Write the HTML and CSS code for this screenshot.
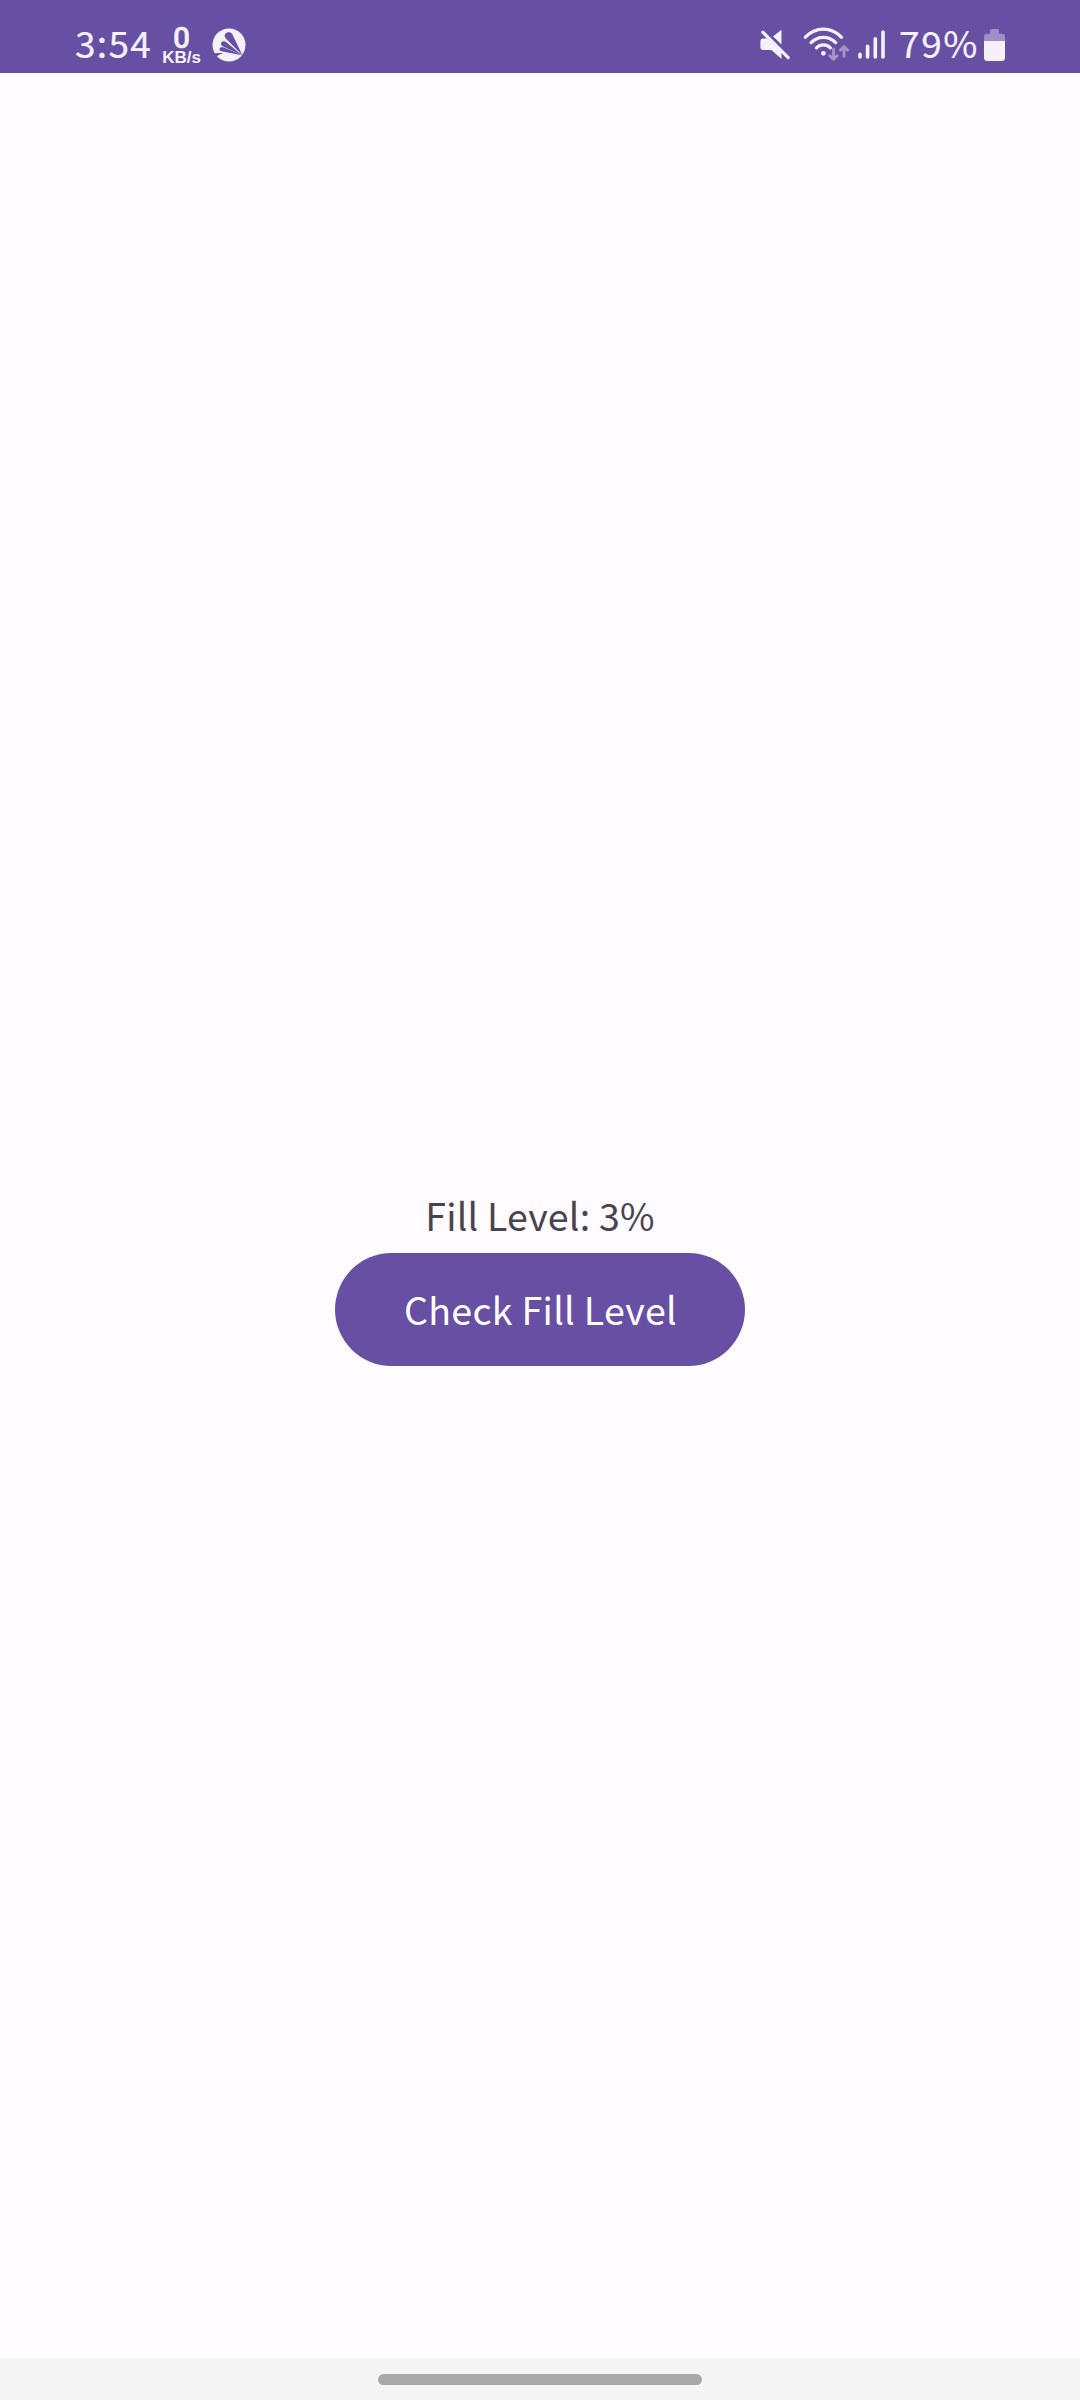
FILE: index.html
```html
<!DOCTYPE html>
<html lang="en">
<head>
<meta charset="utf-8">
<title>Fill Level</title>
<link rel="stylesheet" href="styles.css">
</head>
<body>
<div class="screen">
  <header class="status-bar">
    <div class="status-group">
      <span class="clock">3:54</span>
      <span class="net-speed"><span class="net-value">0</span><span class="net-unit">KB/s</span></span>
      <svg class="app-icon" width="34" height="34" viewBox="0 0 34 34">
        <circle class="solid" cx="17" cy="17" r="16.5"/>
        <path class="cutout" d="M12.7 8.2C12.2 4.5 18 2.6 20.4 6.3L30.4 27.2 15 11.8C13.6 10.4 12.9 9.4 12.7 8.2Z"/>
        <path class="cutout" d="M9 15.4C9.2 12.9 12.4 12.5 14.4 14.2L30 27.2 11.6 18.8C9.8 18 8.8 17 9 15.4Z"/>
        <path class="cutout" d="M7.5 20.7C8 18.9 10.2 18.9 12 19.6L30 27.2 10.6 23.6C8.6 23.2 7 22.4 7.5 20.7Z"/>
        <path class="cutout" d="M0 26.3C4 25.2 7 24.8 11 25.4C8 25.9 6 27 4.4 28.8L0 30Z"/>
      </svg>
    </div>
    <div class="status-group">
      <svg class="mute" width="32" height="32" viewBox="0 0 32 32">
        <path class="solid" d="M13 7.6L21.5 .8V15.6Z"/>
        <path class="solid" d="M2.7 9.6H8.6L21.5 23V30L11.4 21H2.7Q.4 21 .4 18.6V12Q.4 9.6 2.7 9.6Z"/>
        <path class="stroke slash-gap" d="M4.6 1.4L30.4 27.5"/>
        <path class="stroke slash" d="M2.8 3.2L28.2 28.6"/>
      </svg>
      <svg class="wifi" width="46" height="36" viewBox="0 0 46 36">
        <path class="stroke wave" d="M2.4 10.2C12.4 -.5 28.4 -.5 38.4 10.2M8.1 15.6C15 8.5 25.8 8.5 32.7 15.6M13.5 20.8C17.3 16.9 23.5 16.9 27.3 20.8"/>
        <circle class="solid" cx="20.4" cy="26.3" r="2.4"/>
        <path class="stroke arrows" d="M30.5 22.2V32M26.8 28.7L30.5 32.3 34.2 28.7M41 29.3V19.7M37.3 23.2L41 19.5 44.7 23.2"/>
      </svg>
      <svg class="signal" width="28" height="32" viewBox="0 0 28 32">
        <path class="stroke bars" d="M2 25.2V28M9.6 17.2V28M17.3 9.8V28M25 3V28"/>
      </svg>
      <span class="battery-text">79%</span>
      <svg class="battery" width="21" height="32" viewBox="0 0 21 32">
        <path class="faded" d="M0 12V8Q0 4.7 3.3 4.7H6V2Q6 0 8 0H13Q15 0 15 2V4.7H17.7Q21 4.7 21 8V12Z"/>
        <path class="solid" d="M0 12H21V28.5Q21 32 17.5 32H3.5Q0 32 0 28.5Z"/>
      </svg>
    </div>
  </header>
  <main class="content">
    <p class="level">Fill Level: 3%</p>
    <button class="check" type="button">Check Fill Level</button>
  </main>
  <footer class="nav-bar"><div class="handle"></div></footer>
</div>
</body>
</html>
```
FILE: styles.css
```css
* { box-sizing: border-box; }
body { margin: 0; }
.screen {
  width: 1080px;
  height: 2400px;
  display: flex;
  flex-direction: column;
  background: #fffbfe;
  font-family: "Noto Sans CJK SC", "Noto Sans", sans-serif;
}
.status-bar {
  height: 73px;
  padding: 17px 75px 0 75px;
  display: flex;
  justify-content: space-between;
  background: #6750a3;
  color: #f5f1fb;
}
.status-group { display: flex; align-items: flex-start; }
.clock, .battery-text {
  font-size: 37px;
  line-height: 50px;
  white-space: nowrap;
  -webkit-text-stroke: 0.2px currentColor;
}
.clock { width: 86px; letter-spacing: 1.3px; }
.net-speed {
  width: 41px;
  margin-right: 10px;
  padding-top: 10px;
  display: flex;
  flex-direction: column;
  align-items: center;
  font-family: "Liberation Sans", sans-serif;
  font-weight: 700;
}
.net-value {
  font-size: 30px;
  line-height: 22px;
  font-family: Roboto, sans-serif;
  font-weight: 500;
  -webkit-text-stroke: 0.4px currentColor;
}
.net-unit { font-size: 17px; line-height: 18px; }
.app-icon { margin-top: 11px; }
.solid { fill: #f5f1fb; }
.cutout { fill: #6750a3; }
.stroke { fill: none; stroke: #f5f1fb; stroke-linecap: round; stroke-linejoin: round; }
.slash-gap { stroke: #6750a3; stroke-width: 3; }
.slash { stroke-width: 3.2; }
.wave { stroke-width: 3.3; }
.arrows { stroke: #a696c8; stroke-width: 2.8; }
.bars { stroke-width: 3.6; }
.mute { margin: 12px 11px 0 0; }
.wifi { margin: 10px 9px 0 0; }
.signal { margin: 12px 13px 0 0; }
.battery-text { width: 85px; letter-spacing: 1.6px; }
.battery { margin-top: 12px; }
.faded { fill: #a08fc6; }
.content {
  flex: 1;
  display: flex;
  flex-direction: column;
  align-items: center;
  justify-content: center;
  padding-top: 125px;
}
.level {
  margin: 0;
  font-size: 37.5px;
  letter-spacing: 0.2px;
  line-height: 50px;
  padding-bottom: 13px;
  color: #49454f;
}
.check {
  width: 410px;
  height: 113px;
  padding: 0 0 2px 1px;
  border: 0;
  border-radius: 57px;
  background: #6750a3;
  color: #fff;
  font: 400 37.5px/50px "Noto Sans CJK SC", "Noto Sans", sans-serif;
  letter-spacing: 0.3px;
}
.nav-bar {
  height: 42px;
  padding-top: 16px;
  display: flex;
  justify-content: center;
  background: #f5f5f5;
}
.handle { width: 324px; height: 11px; border-radius: 6px; background: #a9a9a9; }
```
